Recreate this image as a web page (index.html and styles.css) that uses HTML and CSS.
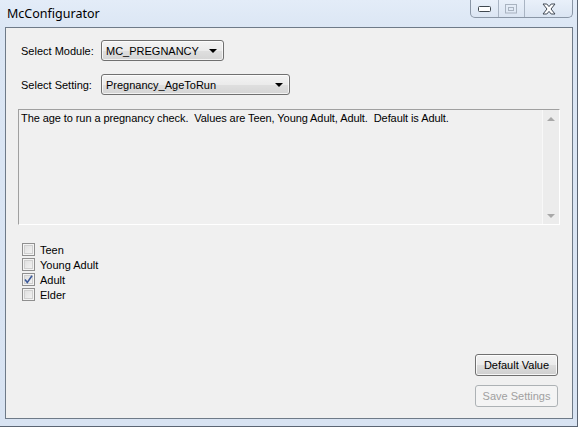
FILE: index.html
```html
<!DOCTYPE html>
<html>
<head>
<meta charset="utf-8">
<link rel="stylesheet" href="styles.css">
</head>
<body>
<div class="window">
  <div class="titlebar">
    <span class="title">McConfigurator</span>
    <div class="caption">
      <div class="cbtn cmin">
        <svg width="14" height="7" viewBox="0 0 14 7"><rect x="0.5" y="0.5" width="12" height="5" rx="1" fill="#fff" stroke="#404850"/></svg>
      </div>
      <div class="cbtn cmax">
        <svg width="13" height="10" viewBox="0 0 13 10"><rect x="0.5" y="0.5" width="11" height="8.5" fill="none" stroke="#a9b3c0"/><rect x="3.5" y="3.5" width="5" height="3" fill="none" stroke="#a9b3c0"/></svg>
      </div>
      <div class="cbtn cclose">
        <svg width="14" height="12" viewBox="0 0 14 12"><path d="M1 1 L4.8 1 L7 3.6 L9.2 1 L13 1 L9 6 L13 11 L9.2 11 L7 8.4 L4.8 11 L1 11 L5 6 Z" fill="#fff" stroke="#3f4753" stroke-width="1" stroke-linejoin="round"/></svg>
      </div>
    </div>
  </div>
  <div class="client">
    <div class="field first">
      <span class="label">Select Module:</span>
      <div class="combo combo-module"><span>MC_PREGNANCY</span><i class="arrow"></i></div>
    </div>
    <div class="field second">
      <span class="label">Select Setting:</span>
      <div class="combo combo-setting"><span>Pregnancy_AgeToRun</span><i class="arrow"></i></div>
    </div>
    <div class="memo">
      <div class="memo-text">The age to run a pregnancy check.  Values are Teen, Young Adult, Adult.  Default is Adult.</div>
      <div class="vscroll">
        <i class="sarrow up"></i>
        <i class="sarrow down"></i>
      </div>
    </div>
    <div class="checks">
      <label class="check"><span class="box"></span>Teen</label>
      <label class="check"><span class="box"></span>Young Adult</label>
      <label class="check"><span class="box checked"><svg width="9" height="9" viewBox="0 0 9 9"><path d="M1 4.5 L3.3 7.5 L8 0.8" fill="none" stroke="#3c5a9a" stroke-width="1.6"/></svg></span>Adult</label>
      <label class="check"><span class="box"></span>Elder</label>
    </div>
    <div class="spacer"></div>
    <div class="buttons">
      <div class="btn">Default Value</div>
      <div class="btn disabled">Save Settings</div>
    </div>
  </div>
</div>
</body>
</html>
```

FILE: styles.css
```css
html, body {
  margin: 0;
  padding: 0;
  background: #dbe6f4;
}
.window {
  width: 578px;
  height: 427px;
  box-sizing: border-box;
  border-right: 1px solid #5b6573;
  border-bottom: 1px solid #5b6573;
  background: linear-gradient(#e3ecf8 0px, #dbe6f4 30px, #d8e3f2 100%);
  display: flex;
  flex-direction: column;
  font-family: "Liberation Sans", Arial, sans-serif;
  font-size: 11px;
  color: #000;
}
.titlebar {
  height: 27px;
  display: flex;
  align-items: flex-start;
  flex-shrink: 0;
}
.title {
  font-family: "Noto Sans", "Open Sans", sans-serif;
  font-size: 12.5px;
  line-height: 28px;
  padding-left: 7px;
  color: #000;
}
.caption {
  margin-left: auto;
  margin-right: 4px;
  display: flex;
  height: 18px;
  box-sizing: border-box;
  border: 1px solid #8a96a6;
  border-top: none;
  border-radius: 0 0 5px 5px;
  background: linear-gradient(#e9f0fa, #dbe5f2);
  overflow: hidden;
}
.cbtn {
  height: 17px;
  display: flex;
  align-items: center;
  justify-content: center;
}
.cmin { width: 28px; border-right: 1px solid #a9b4c3; padding-top: 2px; box-sizing: border-box; }
.cmax { width: 25px; border-right: 1px solid #a9b4c3; }
.cclose { width: 47px; }
.client {
  margin: 0 4px 0 5px;
  height: 392px;
  box-sizing: border-box;
  border: 1px solid #6e7a88;
  background: #f0f0f0;
  display: flex;
  flex-direction: column;
  padding: 0 0 11px 0;
}
.field {
  display: flex;
  align-items: center;
  padding-left: 15px;
  height: 21px;
}
.field.first { margin-top: 12px; }
.field.second { margin-top: 13px; }
.label {
  width: 80px;
  flex-shrink: 0;
}
.combo {
  height: 21px;
  box-sizing: border-box;
  border: 1px solid #707070;
  border-radius: 3px;
  background: linear-gradient(#f3f3f3 0%, #ebebeb 50%, #dfdfdf 51%, #d5d5d5 100%);
  box-shadow: inset 0 0 0 1px rgba(255,255,255,0.7);
  display: flex;
  align-items: center;
  padding-left: 4px;
  position: relative;
}
.combo-module { width: 123px; }
.combo-setting { width: 189px; }
.arrow {
  position: absolute;
  right: 6px;
  top: 8px;
  width: 0;
  height: 0;
  border-left: 4px solid transparent;
  border-right: 4px solid transparent;
  border-top: 4px solid #000;
}
.memo {
  margin: 14px 12px 0 12px;
  height: 116px;
  box-sizing: border-box;
  border: 1px solid;
  border-color: #a0a0a0 #ffffff #ffffff #a0a0a0;
  background: #f0f0f0;
  display: flex;
}
.memo-text {
  flex: 1;
  white-space: pre-wrap;
  padding: 2px 2px 0 2px;
  line-height: 13px;
  letter-spacing: -0.08px;
}
.vscroll {
  width: 17px;
  background: #ececec;
  border-left: 1px solid #f8f8f8;
  box-sizing: border-box;
  display: flex;
  flex-direction: column;
  justify-content: space-between;
  align-items: center;
  padding: 7px 0 6px 0;
}
.sarrow {
  width: 0;
  height: 0;
  border-left: 4px solid transparent;
  border-right: 4px solid transparent;
}
.sarrow.up { border-bottom: 4px solid #a8a8a8; }
.sarrow.down { border-top: 4px solid #a8a8a8; }
.checks {
  margin: 17px 0 0 16px;
  display: flex;
  flex-direction: column;
}
.check {
  display: flex;
  align-items: center;
  height: 15px;
}
.box {
  width: 13px;
  height: 13px;
  box-sizing: border-box;
  border: 1px solid #8f8f8f;
  background: linear-gradient(135deg, #dcdcdc, #f6f6f6);
  box-shadow: inset 0 0 0 1px #f4f4f4, inset 0 0 0 2px #cfcfcf;
  margin-right: 5px;
  display: flex;
  align-items: center;
  justify-content: center;
}
.spacer { flex: 1; }
.buttons {
  align-self: flex-end;
  margin-right: 14px;
  display: flex;
  flex-direction: column;
  gap: 9px;
}
.btn {
  width: 83px;
  height: 22px;
  box-sizing: border-box;
  border: 1px solid #707070;
  border-radius: 3px;
  background: linear-gradient(#f2f2f2 0%, #ebebeb 50%, #dddddd 51%, #cfcfcf 100%);
  box-shadow: inset 0 0 0 1px rgba(255,255,255,0.8);
  display: flex;
  align-items: center;
  justify-content: center;
}
.btn.disabled {
  border-color: #adb2b5;
  background: #f4f4f4;
  color: #a0a0a0;
  box-shadow: none;
}
```
